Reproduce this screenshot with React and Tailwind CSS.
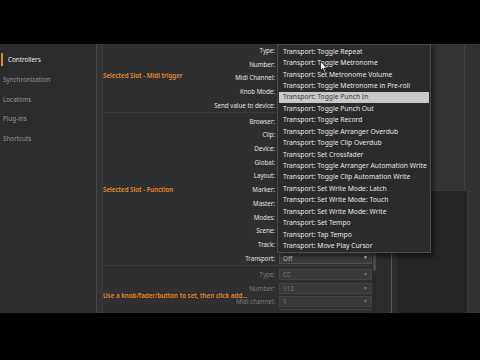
import React from "react";

const items = [
  "Transport: Toggle Repeat",
  "Transport: Toggle Metronome",
  "Transport: Set Metronome Volume",
  "Transport: Toggle Metronome in Pre-roll",
  "Transport: Toggle Punch In",
  "Transport: Toggle Punch Out",
  "Transport: Toggle Record",
  "Transport: Toggle Arranger Overdub",
  "Transport: Toggle Clip Overdub",
  "Transport: Set Crossfader",
  "Transport: Toggle Arranger Automation Write",
  "Transport: Toggle Clip Automation Write",
  "Transport: Set Write Mode: Latch",
  "Transport: Set Write Mode: Touch",
  "Transport: Set Write Mode: Write",
  "Transport: Set Tempo",
  "Transport: Tap Tempo",
  "Transport: Move Play Cursor",
];

const sideItems = ["Controllers", "Synchronization", "Locations", "Plug-ins", "Shortcuts"];

function Row({ label, children, dim, h = "h-[13.6px]" }) {
  return (
    <div className={`flex items-center ${h}`}>
      <div className={`w-[76px] text-right text-[6.2px] pr-[1px] whitespace-nowrap ${dim ? "text-[#7a7a7a]" : "text-[#e2e2e2]"}`}>{label}</div>
      <div className="w-[3px]" />
      <div className="w-[93px]">{children}</div>
    </div>
  );
}

function Field({ value, dim }) {
  return (
    <div className={`h-[11px] flex items-center justify-between px-[3px] border ${dim ? "bg-[#393939] border-[#444] text-[#777]" : "bg-[#3d3d3d] border-[#4f4f4f] text-[#d8d8d8]"} text-[6.3px]`}>
      <span>{value}</span>
      <span className="text-[5px]">▼</span>
    </div>
  );
}

function Heading({ children }) {
  return <div className="text-[6.2px] font-semibold text-[#e98b2c] leading-none whitespace-nowrap">{children}</div>;
}

export default function App() {
  return (
    <div className="w-[480px] h-[360px] bg-black flex flex-col overflow-hidden" style={{ fontFamily: '"Noto Sans", "Open Sans", sans-serif' }}>
      <div className="h-[44px] bg-black" />
      <div className="h-[269px] flex relative bg-[#2f2f2f]">
        {/* sidebar */}
        <div className="w-[96px] bg-[#2c2c2c] flex flex-col pt-[6px]">
          {sideItems.map((s, i) => (
            <div key={s} className="h-[19.7px] flex items-center">
              {i === 0 ? (
                <>
                  <div className="w-[2px] h-[13px] bg-[#d98a2a] ml-[1px]" />
                  <span className="ml-[5px] text-[6.3px] text-[#ececec]">{s}</span>
                </>
              ) : (
                <span className="ml-[3px] text-[6.3px] text-[#9a9a9a]">{s}</span>
              )}
            </div>
          ))}
        </div>
        <div className="w-[1px] bg-[#474747]" />
        <div className="w-[5px] bg-[#333]" />
        <div className="w-[1px] bg-[#3c3c3c]" />

        {/* main */}
        <div className="w-[269px] flex flex-col">
          <div className="flex h-[69px] border-b border-[#3c3c3c]">
            <div className="w-[97px] flex items-center pb-[4px]">
              <Heading>Selected Slot - Midi trigger</Heading>
            </div>
            <div className="flex flex-col">
              <Row label="Type:" />
              <Row label="Number:" />
              <Row label="Midi Channel:" />
              <Row label="Knob Mode:" />
              <Row label="Send value to device:" />
            </div>
          </div>
          <div className="flex h-[153px] border-b border-[#3c3c3c]">
            <div className="w-[97px] flex items-center pt-[3px]">
              <Heading>Selected Slot - Function</Heading>
            </div>
            <div className="flex flex-col pt-[1.5px]">
              {["Browser:", "Clip:", "Device:", "Global:", "Layout:", "Marker:", "Master:", "Modes:", "Scene:", "Track:"].map((l) => (
                <Row key={l} label={l} h="h-[13.75px]" />
              ))}
              <Row label="Transport:" h="h-[13.75px]">
                <Field value="Off" />
              </Row>
            </div>
          </div>
          <div className="flex flex-1 relative">
            <div className="w-[97px] flex items-end pb-[14px] z-10">
              <Heading>Use a knob/fader/button to set, then click add...</Heading>
            </div>
            <div className="flex flex-col pt-[2px]">
              <Row label="Type:" dim>
                <Field value="CC" dim />
              </Row>
              <Row label="Number:" dim>
                <Field value="112" dim />
              </Row>
              <Row label="Midi channel:" dim>
                <Field value="1" dim />
              </Row>
              <div className="h-[4px] ml-[79px] w-[93px] border-t border-[#444]" />
            </div>
          </div>
        </div>

        {/* scrollbar */}
        <div className="w-[5px] bg-[#2a2a2a] flex flex-col">
          <div className="h-[199px]" />
          <div className="h-[28px] mx-[1px] bg-[#4a4a4a] rounded-[2px]" />
        </div>
        <div className="w-[14px] bg-[#2c2c2c]" />
        <div className="w-[1px] bg-[#5a5a5a]" />

        {/* right panel */}
        <div className="flex-1 flex flex-col bg-[#2e2e2e]">
          <div className="h-[146px] flex">
            <div className="w-[40px]" />
            <div className="w-[32px] bg-[#343434]" />
            <div className="w-[1px] bg-[#3e3e3e]" />
            <div className="flex-1 bg-[#323232]" />
          </div>
          <div className="flex-1 flex">
            <div className="w-[5px]" />
            <div className="w-[70px] bg-[#262626] border-t border-[#3a3a3a]" />
            <div className="w-[1px] bg-[#3a3a3a]" />
            <div className="flex-1 bg-[#333]" />
          </div>
        </div>

        {/* dropdown popup */}
        <div className="absolute left-[277px] top-0 w-[154px] h-[209px] bg-[#2b2b2b] border border-[#4c4c4c] shadow-[2px_3px_6px_rgba(0,0,0,0.6)] pt-[1px] px-[1px]">
          {items.map((it, i) => (
            <div
              key={it}
              className={`h-[11.45px] flex items-center pl-[4px] text-[6.75px] whitespace-nowrap ${i === 4 ? "bg-[#c9c9c9] text-[#3a3a3a]" : "text-[#e6e6e6]"}`}
            >
              {it}
            </div>
          ))}
        </div>

        {/* mouse cursor */}
        <svg className="absolute left-[320px] top-[17px]" width="8" height="12" viewBox="0 0 8 12">
          <path d="M0.5 0.5 L0.5 9.5 L2.7 7.6 L4.3 11.2 L5.6 10.6 L4.1 7.1 L7.2 7.1 Z" fill="#f4f4f4" stroke="#222" strokeWidth="0.8" />
        </svg>
      </div>
      <div className="flex-1 bg-black" />
    </div>
  );
}
